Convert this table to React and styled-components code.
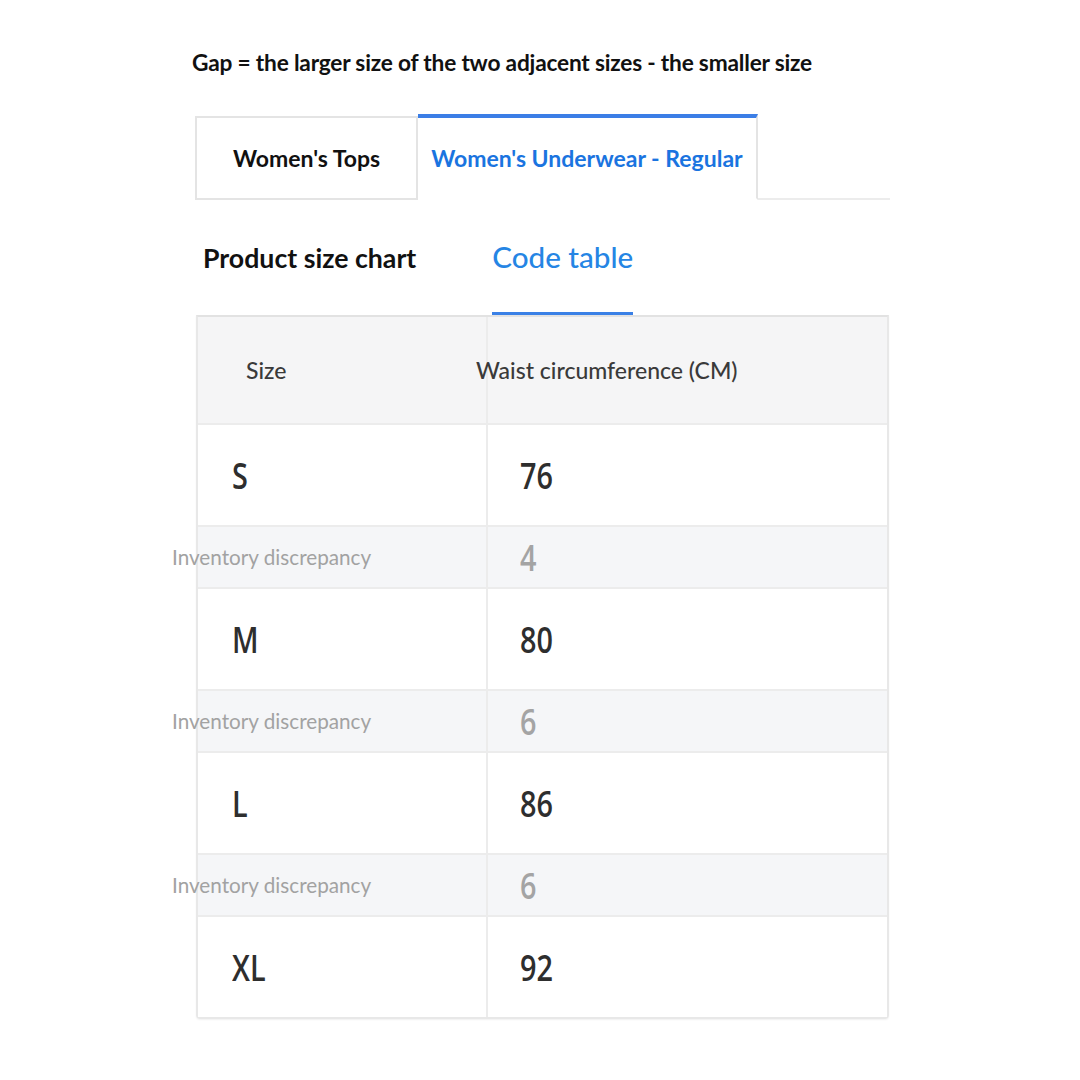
import styled, { createGlobalStyle } from "styled-components";

const GlobalStyle = createGlobalStyle`
  body {
    margin: 0;
    background: #ffffff;
    font-family: Lato, "Open Sans", sans-serif;
  }
`;

const Page = styled.div`
  width: 1080px;
  height: 1080px;
  padding: 48px 0 0 192px;
  box-sizing: border-box;
`;

const Title = styled.div`
  font-size: 22.7px;
  font-weight: 700;
  color: #111;
  line-height: 30px;
  letter-spacing: -0.2px;
`;

const TabBar = styled.div`
  display: flex;
  margin-top: 38px;
  margin-left: 3px;
  width: 695px;
  border-bottom: 2px solid #ececec;
`;

const Tab = styled.div`
  display: flex;
  align-items: center;
  box-sizing: border-box;
  padding: 0 ${(p) => (p.$active ? "13px" : "36px")};
  font-size: 23px;
  font-weight: 700;
  margin-bottom: -2px;
  color: ${(p) => (p.$active ? "#1a74e0" : "#111")};
  background: #fff;
  border: 2px solid #e4e4e4;
  border-top: ${(p) => (p.$active ? "4px solid #3b7ee6" : "2px solid #e4e4e4")};
  border-left: ${(p) => (p.$active ? "none" : "2px solid #e4e4e4")};
  border-bottom: ${(p) => (p.$active ? "2px solid #fff" : "2px solid #e4e4e4")};
  margin-top: ${(p) => (p.$active ? "-2px" : "0")};
  height: ${(p) => (p.$active ? "86px" : "84px")};
`;

const SubTabs = styled.div`
  display: flex;
  align-items: flex-end;
  height: 115px;
  margin-left: 11px;
`;

const SubTab = styled.div`
  height: 100%;
  box-sizing: border-box;
  display: flex;
  align-items: center;
  font-size: ${(p) => (p.$active ? "29.6px" : "26.7px")};
  font-weight: ${(p) => (p.$active ? 500 : 700)};
  color: ${(p) => (p.$active ? "#2585e4" : "#111")};
  margin-right: ${(p) => (p.$active ? "0" : "76px")};
  border-bottom: 3px solid ${(p) => (p.$active ? "#3a80e6" : "transparent")};
  line-height: 1;
  > span {
    margin-top: ${(p) => (p.$active ? "2px" : "4px")};
  }
`;

const Table = styled.div`
  display: grid;
  grid-template-columns: 290px 1fr;
  width: 693px;
  margin-left: 4px;
  border: 2px solid #e8e8e8;
  border-top: 2px solid #e2e2e2;
  border-radius: 0 0 4px 4px;
  box-sizing: border-box;
  box-shadow: 0 1px 2px rgba(0, 0, 0, 0.06);
`;

const Cell = styled.div`
  display: flex;
  align-items: center;
  box-sizing: border-box;
  height: ${(p) => p.$h}px;
  background: ${(p) => p.$bg || "#fff"};
  border-bottom: ${(p) => (p.$last ? "none" : "2px solid #ececec")};
  border-right: ${(p) => (p.$first ? "2px solid #ececec" : "none")};
  padding-left: ${(p) => p.$pad}px;
  min-width: 0;
  overflow: visible;
`;

const HeadText = styled.span`
  font-size: 23px;
  font-weight: 500;
  color: #3a3a3a;
  margin-left: ${(p) => p.$shift || 0}px;
  white-space: nowrap;
`;

const ValueText = styled.span`
  font-family: "Open Sans", "Noto Sans", sans-serif;
  font-size: 36px;
  font-weight: 600;
  color: ${(p) => (p.$muted ? "#a4a4a4" : "#2e2e2e")};
  transform: scaleX(0.8);
  transform-origin: left center;
  display: inline-block;
`;

const LabelText = styled.span`
  font-size: 20.7px;
  color: #a2a2a2;
  margin-left: -26px;
  white-space: nowrap;
`;

const rows = [
  { size: "S", value: "76" },
  { gap: "4" },
  { size: "M", value: "80" },
  { gap: "6" },
  { size: "L", value: "86" },
  { gap: "6" },
  { size: "XL", value: "92" },
];

export default function App() {
  return (
    <Page>
      <GlobalStyle />
      <Title>Gap = the larger size of the two adjacent sizes - the smaller size</Title>
      <TabBar>
        <Tab>Women's Tops</Tab>
        <Tab $active>Women's Underwear - Regular</Tab>
      </TabBar>
      <SubTabs>
        <SubTab>
          <span>Product size chart</span>
        </SubTab>
        <SubTab $active>
          <span>Code table</span>
        </SubTab>
      </SubTabs>
      <Table>
        <Cell $first $h={108} $bg="#f5f5f6" $pad={48}>
          <HeadText>Size</HeadText>
        </Cell>
        <Cell $h={108} $bg="#f5f5f6" $pad={0}>
          <HeadText $shift={-12}>Waist circumference (CM)</HeadText>
        </Cell>
        {rows.map((r, i) => {
          const last = i === rows.length - 1;
          if (r.gap) {
            return [
              <Cell key={i + "a"} $first $h={62} $bg="#f5f6f8" $pad={0}>
                <LabelText>Inventory discrepancy</LabelText>
              </Cell>,
              <Cell key={i + "b"} $h={62} $bg="#f5f6f8" $pad={32}>
                <ValueText $muted>{r.gap}</ValueText>
              </Cell>,
            ];
          }
          return [
            <Cell key={i + "a"} $first $last={last} $h={last ? 100 : 102} $pad={34}>
              <ValueText>{r.size}</ValueText>
            </Cell>,
            <Cell key={i + "b"} $last={last} $h={last ? 100 : 102} $pad={32}>
              <ValueText>{r.value}</ValueText>
            </Cell>,
          ];
        })}
      </Table>
    </Page>
  );
}
